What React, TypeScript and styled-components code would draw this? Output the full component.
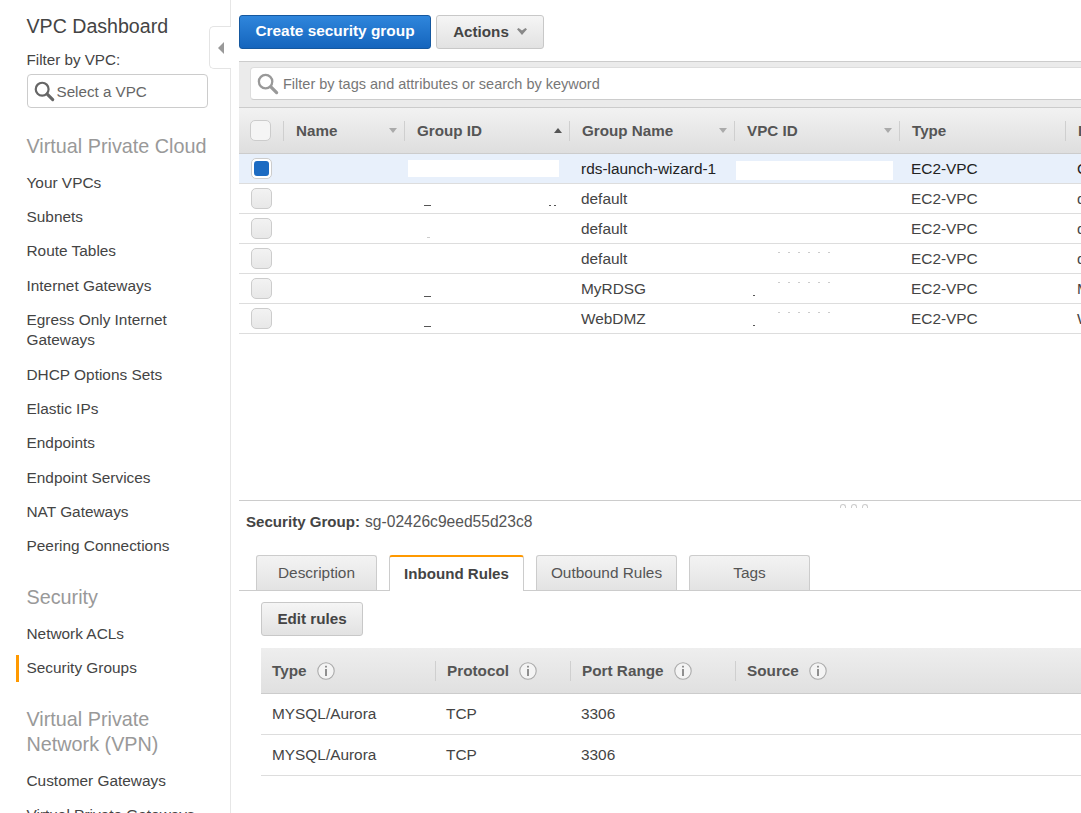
import React from "react";
import styled, { createGlobalStyle, css } from "styled-components";

const Global = createGlobalStyle`
  html, body { margin: 0; height: 100%; overflow: hidden; background: #fff; }
  body { font-family: "Liberation Sans", Arial, sans-serif; font-size: 15.4px; color: #444; -webkit-font-smoothing: antialiased; }
  #root { height: 100%; }
`;

const Page = styled.div`display: flex; height: 100vh; overflow: hidden;`;

const Sidebar = styled.nav`
  position: relative; flex: 0 0 231px; box-sizing: border-box; height: 100%;
  border-right: 1px solid #e6e6e6; padding: 13px 20px 0 26.5px; overflow: visible;
`;
const SideTitle = styled.h1`margin: 0; font-size: 19.6px; font-weight: 400; line-height: 26px; color: #444;`;
const FilterLabel = styled.div`margin-top: 11px; font-size: 15.2px; line-height: 20px; color: #444;`;
const VpcSelect = styled.div`
  box-sizing: border-box; margin-top: 4px; width: 181px; height: 34px; display: flex; align-items: center; gap: 2px;
  padding-left: 5px; border: 1px solid #ccc; border-radius: 4px; color: #666; font-size: 15.2px;
`;
const SideHeading = styled.h2<{ $top: number }>`
  margin: ${p => p.$top}px 0 6.5px; font-size: 19.8px; font-weight: 400; line-height: 25px; color: #999;
`;
const SideItem = styled.a<{ $active?: boolean }>`
  position: relative; display: block; padding: 7.2px 0; line-height: 20px; font-size: 15.4px; color: #444;
  ${p => p.$active && css`
    &::before { content: ""; position: absolute; left: -10.5px; top: 3.5px; bottom: 3.5px; width: 3px; background: #f90; }
  `}
`;
const CollapseTab = styled.div`
  position: absolute; right: -1px; top: 26px; width: 22px; height: 43px; box-sizing: border-box; background: #fff;
  border: 1px solid #e4e4e4; border-right: 0; border-radius: 5px 0 0 5px; display: flex; align-items: center; justify-content: center;
  &::before { content: ""; border-style: solid; border-width: 6px 6px 6px 0; border-color: transparent #999 transparent transparent; margin-right: -1px; }
`;

const Main = styled.main`flex: 1; min-width: 0; margin-left: 8px; overflow: hidden; display: flex; flex-direction: column;`;
const Toolbar = styled.div`display: flex; gap: 5px; padding-top: 15px; height: 34px;`;
const PrimaryButton = styled.button`
  box-sizing: border-box; width: 192px; height: 34px; padding: 0 0 2px; border: 1px solid #15589f; border-radius: 3px;
  background: linear-gradient(#2f86dc, #1565bd); color: #fff; font: 700 15.4px "Liberation Sans", Arial, sans-serif;
`;
const GrayButton = styled.button<{ $w: number }>`
  box-sizing: border-box; width: ${p => p.$w}px; height: 34px; padding: 0 0 2px; border: 1px solid #c8c8c8; border-radius: 3px;
  background: linear-gradient(#f5f5f5, #e2e2e2); color: #444; font: 700 15.2px "Liberation Sans", Arial, sans-serif;
  display: inline-flex; align-items: center; justify-content: center; gap: 8px;
`;
const FilterBar = styled.div`
  box-sizing: border-box; margin-top: 12px; height: 47px; padding: 5px 0 0 11px; background: #ebebeb;
  border-top: 1px solid #ccc; border-bottom: 1px solid #ccc;
`;
const SearchInput = styled.div`
  box-sizing: border-box; width: 900px; height: 33px; background: #fff; border: 1px solid #ddd; border-bottom-color: #ccc; border-radius: 4px;
  display: flex; align-items: center; gap: 4px; padding-left: 5px; color: #777; font-size: 14.5px;
`;

const COLS = "44px 121px 165px 165px 165px 166px 300px";
const HeadRow = styled.div`
  display: grid; grid-template-columns: ${COLS}; height: 46px; box-sizing: border-box;
  background: linear-gradient(#f2f2f2, #dedede); border-bottom: 1px solid #ccc; align-items: center;
`;
const HeadCell = styled.div`
  height: 20px; display: flex; align-items: center; justify-content: space-between;
  padding: 0 7px 0 12px; font-weight: 700; font-size: 15.2px; color: #555; white-space: nowrap;
  border-left: 1px solid #cfcfcf;
`;
const Caret = styled.span<{ $up?: boolean }>`
  width: 0; height: 0; border-style: solid;
  ${p => p.$up
    ? css`border-width: 0 4px 5px; border-color: transparent transparent #555;`
    : css`border-width: 5px 4px 0; border-color: #aaa transparent transparent;`}
`;
const CheckCell = styled.div`padding-left: 12px; display: flex; align-items: center;`;
const Check = styled.span<{ $checked?: boolean; $head?: boolean }>`
  box-sizing: border-box; display: flex; align-items: center; justify-content: center; width: 21px; height: 21px;
  margin-left: ${p => (p.$head ? "-1px" : "0")}; border: 1px solid #ccc; border-radius: 5px;
  background: ${p => (p.$checked ? "#fff" : p.$head ? "#f5f5f5" : "linear-gradient(#f2f2f2, #e8e8e8)")};
  ${p => p.$checked && css`
    &::before { content: ""; width: 15px; height: 15px; border-radius: 3px; background: #1c6bc2; }
  `}
`;
const Row = styled.div<{ $selected?: boolean }>`
  position: relative; display: grid; grid-template-columns: ${COLS}; height: 30px; box-sizing: border-box; align-items: center;
  border-bottom: 1px solid #ddd; background: ${p => (p.$selected ? "#e8f0fb" : "#fff")}; color: ${p => (p.$selected ? "#222" : "#444")};
`;
const Cell = styled.div`padding-left: 12px; white-space: nowrap; overflow: hidden; font-size: 15.4px;`;
const WhiteOut = styled.span<{ $l: number; $w: number; $t: number; $h: number }>`
  position: absolute; left: ${p => p.$l}px; top: ${p => p.$t}px; width: ${p => p.$w}px; height: ${p => p.$h}px; background: #fff;
`;
const Speck = styled.span<{ $l: number; $t: number; $w: number; $c?: string }>`
  position: absolute; left: ${p => p.$l}px; top: ${p => p.$t}px; width: ${p => p.$w}px; height: 1px; background: ${p => p.$c ?? "#555"};
`;
const DottedSpeck = styled.span<{ $t: number }>`
  position: absolute; left: 539px; top: ${p => p.$t}px; width: 60px; height: 1px;
  background: repeating-linear-gradient(90deg, #ccc 0 2px, transparent 2px 10px);
`;
const TableSpacer = styled.div`height: 166px;`;

const PaneDivider = styled.div`position: relative; border-top: 1px solid #ccc; height: 0;`;
const Grips = styled.div`
  position: absolute; left: 601px; top: 3px; display: flex; gap: 5px;
  & > span { width: 6px; height: 4px; border: 1px solid #ccc; border-bottom: 0; border-radius: 3px 3px 0 0; box-sizing: border-box; }
`;
const PaneTitle = styled.div`
  padding: 12px 0 0 7px; line-height: 18px; font-size: 15.6px; color: #555; display: flex; gap: 5px;
`;
const PaneLabel = styled.b`color: #444; font-size: 15.1px;`;
const Tabs = styled.div`
  margin-top: 24px; height: 36px; box-sizing: border-box; display: flex; gap: 12px; padding-left: 17px; border-bottom: 1px solid #ccc;
`;
const Tab = styled.div<{ $w: number; $active?: boolean }>`
  box-sizing: border-box; width: ${p => p.$w}px; height: 35px; display: flex; align-items: center; justify-content: center;
  padding-bottom: 1px; border: 1px solid #ccc; border-bottom: 0; border-radius: 3px 3px 0 0; font-size: 15.4px;
  background: linear-gradient(#f3f3f3, #e3e3e3); color: #555;
  ${p => p.$active && css`
    height: 36px; background: #fff; border-top: 2px solid #f90; font-size: 15.1px; font-weight: 700; color: #444; padding-bottom: 2px;
  `}
`;
const DetailBody = styled.div`padding: 11px 0 0 22px;`;
const RulesHead = styled.div`
  margin-top: 12px; display: grid; grid-template-columns: 174px 135px 165px 1fr; height: 46px; box-sizing: border-box; align-items: center;
  background: linear-gradient(#eeeeee, #e0e0e0); border-bottom: 1px solid #ccc;
`;
const RulesHeadCell = styled.div<{ $first?: boolean }>`
  height: 20px; display: flex; align-items: center; gap: 10px; padding-left: 11px;
  font-weight: 700; font-size: 15.3px; color: #555; ${p => !p.$first && css`border-left: 1px solid #cfcfcf;`}
`;
const RulesRow = styled.div`
  display: grid; grid-template-columns: 174px 135px 165px 1fr; height: 41px; box-sizing: border-box; align-items: center;
  border-bottom: 1px solid #ddd; font-size: 15.4px; color: #444;
`;
const RulesCell = styled.div`padding-left: 11px;`;

const Search = ({ color, size = 24 }: { color: string; size?: number }) => (
  <svg width={size} height={size} viewBox="0 0 24 24" fill="none" style={{ flex: "none" }}>
    <circle cx="10" cy="10" r="7" stroke={color} strokeWidth="2.4" />
    <path d="M15.5 15.5l6 6" stroke={color} strokeWidth="3.4" strokeLinecap="round" />
  </svg>
);
const Chevron = () => (
  <svg width="10" height="7" viewBox="0 0 10 7" style={{ flex: "none" }}>
    <path d="M0 1.2L1.6 0 5 2.6 8.4 0 10 1.2 5 7z" fill="#888" />
  </svg>
);
const Info = () => (
  <svg width="18" height="18" viewBox="0 0 18 18" fill="none">
    <circle cx="9" cy="9" r="8.2" fill="#f4f4f4" stroke="#aaa" strokeWidth="1.1" />
    <rect x="8.2" y="3.8" width="1.6" height="1.7" fill="#777" />
    <rect x="8.2" y="7" width="1.6" height="7" fill="#777" />
  </svg>
);

const heads = ["Name", "Group ID", "Group Name", "VPC ID", "Type", "Description"];
const rows = [
  { name: "rds-launch-wizard-1", d: "Created by RDS" },
  { name: "default", d: "default VPC" },
  { name: "default", d: "default VPC" },
  { name: "default", d: "default VPC" },
  { name: "MyRDSG", d: "MyRDSG" },
  { name: "WebDMZ", d: "WebDMZ" },
];
const navA = ["Your VPCs", "Subnets", "Route Tables", "Internet Gateways", "Egress Only Internet Gateways", "DHCP Options Sets", "Elastic IPs", "Endpoints", "Endpoint Services", "NAT Gateways", "Peering Connections"];

export default function App() {
  return (
    <Page>
      <Global />
      <Sidebar>
        <SideTitle>VPC Dashboard</SideTitle>
        <FilterLabel>Filter by VPC:</FilterLabel>
        <VpcSelect><Search color="#666" size={22} />Select a VPC</VpcSelect>
        <SideHeading $top={26}>Virtual Private Cloud</SideHeading>
        {navA.map(n => <SideItem key={n}>{n}</SideItem>)}
        <SideHeading $top={21.5}>Security</SideHeading>
        <SideItem>Network ACLs</SideItem>
        <SideItem $active>Security Groups</SideItem>
        <SideHeading $top={21.5}>Virtual Private Network (VPN)</SideHeading>
        <SideItem>Customer Gateways</SideItem>
        <SideItem>Virtual Private Gateways</SideItem>
        <CollapseTab />
      </Sidebar>
      <Main>
        <Toolbar>
          <PrimaryButton>Create security group</PrimaryButton>
          <GrayButton $w={108}>Actions<Chevron /></GrayButton>
        </Toolbar>
        <FilterBar>
          <SearchInput><Search color="#999" size={23} />Filter by tags and attributes or search by keyword</SearchInput>
        </FilterBar>
        <HeadRow>
          <CheckCell><Check $head /></CheckCell>
          {heads.map(h => (
            <HeadCell key={h}>
              {h}
              {h !== "Type" && h !== "Description" && <Caret $up={h === "Group ID"} />}
            </HeadCell>
          ))}
        </HeadRow>
        {rows.map((r, i) => (
          <Row key={i} $selected={i === 0}>
            <CheckCell><Check $checked={i === 0} /></CheckCell>
            <Cell />
            <Cell />
            <Cell>{r.name}</Cell>
            <Cell />
            <Cell>EC2-VPC</Cell>
            <Cell>{r.d}</Cell>
            {i === 0 && <WhiteOut $l={169} $w={151} $t={6} $h={17} />}
            {i === 0 && <WhiteOut $l={497} $w={157} $t={7} $h={19} />}
            {i === 1 && <Speck $l={185} $t={21} $w={7} />}
            {i === 1 && <Speck $l={310} $t={21} $w={2} />}
            {i === 1 && <Speck $l={315} $t={21} $w={2} />}
            {i === 2 && <Speck $l={188} $t={23} $w={3} $c="#ccc" />}
            {i >= 3 && <DottedSpeck $t={8} />}
            {i >= 4 && <Speck $l={185} $t={22} $w={7} />}
            {i >= 4 && <Speck $l={514} $t={21} $w={2} />}
          </Row>
        ))}
        <TableSpacer />
        <PaneDivider><Grips><span /><span /><span /></Grips></PaneDivider>
        <PaneTitle><PaneLabel>Security Group:</PaneLabel> sg-02426c9eed55d23c8</PaneTitle>
        <Tabs>
          <Tab $w={121}>Description</Tab>
          <Tab $w={135} $active>Inbound Rules</Tab>
          <Tab $w={141}>Outbound Rules</Tab>
          <Tab $w={121}>Tags</Tab>
        </Tabs>
        <DetailBody>
          <GrayButton $w={102}>Edit rules</GrayButton>
          <RulesHead>
            <RulesHeadCell $first>Type <Info /></RulesHeadCell>
            <RulesHeadCell>Protocol <Info /></RulesHeadCell>
            <RulesHeadCell>Port Range <Info /></RulesHeadCell>
            <RulesHeadCell>Source <Info /></RulesHeadCell>
          </RulesHead>
          {[0, 1].map(i => (
            <RulesRow key={i}>
              <RulesCell>MYSQL/Aurora</RulesCell>
              <RulesCell>TCP</RulesCell>
              <RulesCell>3306</RulesCell>
              <RulesCell />
            </RulesRow>
          ))}
        </DetailBody>
      </Main>
    </Page>
  );
}
